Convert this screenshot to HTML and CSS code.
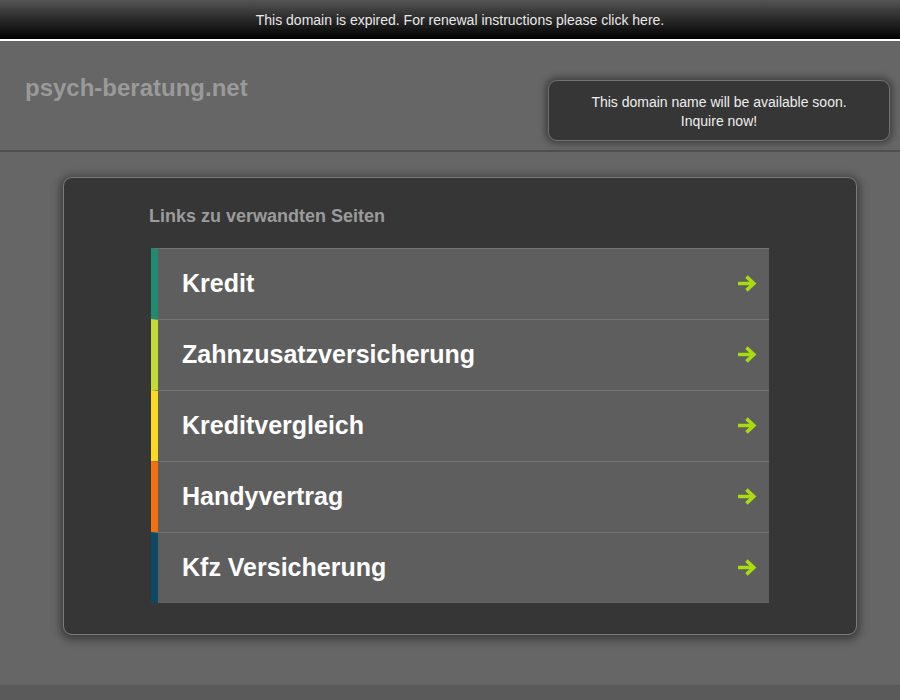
FILE: index.html
```html
<!DOCTYPE html>
<html>
<head>
<meta charset="utf-8">
<title>psych-beratung.net</title>
<link rel="stylesheet" href="styles.css">
</head>
<body>
<div class="page">
  <div class="topbar"><span class="topbar-text">This domain is expired. For renewal instructions please click here.</span></div>
  <header class="header">
    <div class="domain">psych-beratung.net</div>
    <div class="inquire">This domain name will be available soon.<br>Inquire now!</div>
  </header>
  <main class="main">
    <div class="panel">
      <h2 class="related-title">Links zu verwandten Seiten</h2>
      <ul class="links">
        <li class="link c1"><span class="label">Kredit</span><svg class="arrow" viewBox="0 0 20 18"><path d="M1 9h14M9 2.5l7 6.5-7 6.5" fill="none" stroke="#a8dc10" stroke-width="3.4" stroke-linejoin="miter"/></svg></li>
        <li class="link c2"><span class="label">Zahnzusatzversicherung</span><svg class="arrow" viewBox="0 0 20 18"><path d="M1 9h14M9 2.5l7 6.5-7 6.5" fill="none" stroke="#a8dc10" stroke-width="3.4" stroke-linejoin="miter"/></svg></li>
        <li class="link c3"><span class="label">Kreditvergleich</span><svg class="arrow" viewBox="0 0 20 18"><path d="M1 9h14M9 2.5l7 6.5-7 6.5" fill="none" stroke="#a8dc10" stroke-width="3.4" stroke-linejoin="miter"/></svg></li>
        <li class="link c4"><span class="label">Handyvertrag</span><svg class="arrow" viewBox="0 0 20 18"><path d="M1 9h14M9 2.5l7 6.5-7 6.5" fill="none" stroke="#a8dc10" stroke-width="3.4" stroke-linejoin="miter"/></svg></li>
        <li class="link c5"><span class="label">Kfz Versicherung</span><svg class="arrow" viewBox="0 0 20 18"><path d="M1 9h14M9 2.5l7 6.5-7 6.5" fill="none" stroke="#a8dc10" stroke-width="3.4" stroke-linejoin="miter"/></svg></li>
      </ul>
    </div>
  </main>
</div>
</body>
</html>
```

FILE: styles.css
```css
html, body {
  margin: 0;
  padding: 0;
  background: #5a5a5a;
  font-family: "Liberation Sans", Arial, sans-serif;
}
.page {
  background: #666666;
  height: 685px;
  box-shadow: 0 3px 10px rgba(0,0,0,0.45);
}
.topbar {
  height: 39px;
  background: linear-gradient(#555555, #3a3a3a 30%, #000000);
  border-bottom: 2px solid #ffffff;
  display: flex;
  align-items: center;
  justify-content: center;
  padding-left: 20px;
}
.topbar-text {
  color: #e8e8e8;
  font-size: 14px;
}
.header {
  height: 109px;
  border-bottom: 2px solid #4e4e4e;
  display: flex;
  justify-content: space-between;
  align-items: flex-start;
  padding: 0 10px 0 25px;
}
.domain {
  margin-top: 33px;
  color: #9a9a9a;
  font-size: 24px;
  font-weight: bold;
}
.inquire {
  margin-top: 39px;
  width: 342px;
  height: 61px;
  box-sizing: border-box;
  background: #363636;
  border: 1px solid #707070;
  border-radius: 9px;
  box-shadow: 0 0 6px 3px rgba(0,0,0,0.35);
  color: #eeeeee;
  font-size: 14px;
  line-height: 19px;
  text-align: center;
  padding-top: 12px;
}
.main {
  padding: 25px 43px 0 63px;
}
.panel {
  background: #363636;
  border: 1px solid #7a7a7a;
  border-radius: 9px;
  box-shadow: 0 2px 8px 3px rgba(0,0,0,0.4);
  height: 458px;
  box-sizing: border-box;
  padding: 27px 87px 0 85px;
}
.related-title {
  margin: 0 0 21px 0;
  color: #9b9b9b;
  font-size: 18px;
  font-weight: bold;
  line-height: 22px;
}
.links {
  list-style: none;
  margin: 0;
  padding: 0 0 0 2px;
}
.link {
  height: 71px;
  box-sizing: border-box;
  background: #5e5e5e;
  border-top: 1px solid #737373;
  border-left: 7px solid #1e8a6e;
  display: flex;
  align-items: center;
  justify-content: space-between;
  padding: 0 11px 2px 24px;
}
.link.c1 { border-left-color: #1f8b70; }
.link.c2 { border-left-color: #c2db35; }
.link.c3 { border-left-color: #fbdb1f; }
.link.c4 { border-left-color: #f5700f; }
.link.c5 { border-left-color: #0b4a62; }
.label {
  color: #ffffff;
  font-size: 25px;
  font-weight: bold;
}
.arrow {
  width: 21px;
  height: 19px;
}
```
